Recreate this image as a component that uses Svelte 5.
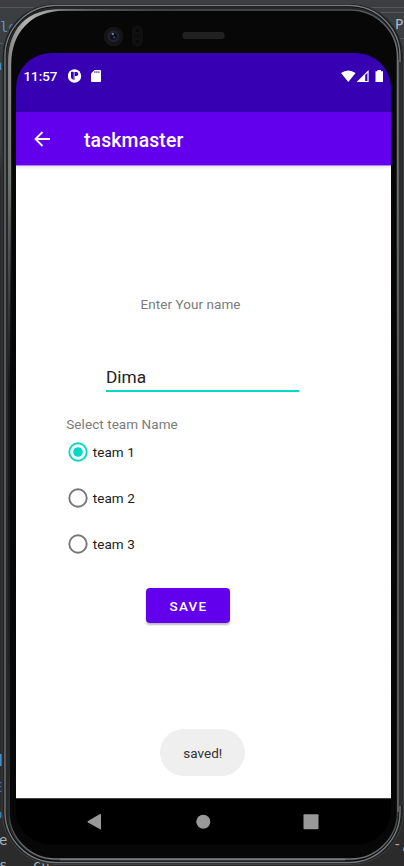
<script>
  const teams = ['team 1', 'team 2', 'team 3'];
  let selected = $state('team 1');
  let name = $state('Dima');
</script>

<main class="desk">
  <svg class="shell" width="404" height="866" viewBox="0 0 404 866" aria-hidden="true">
    <defs>
      <linearGradient id="desk" x1="0" y1="0" x2="0" y2="1">
        <stop offset="0" stop-color="#3c3f41" />
        <stop offset=".17" stop-color="#3a3c3e" />
        <stop offset=".2" stop-color="#2b2b2b" />
      </linearGradient>
      <linearGradient id="rim" x1="0" y1="0" x2="0" y2="1">
        <stop offset="0" stop-color="#55575a" />
        <stop offset=".1" stop-color="#858787" />
        <stop offset=".3" stop-color="#5b5d5c" />
        <stop offset=".45" stop-color="#1c1c1c" />
        <stop offset=".6" stop-color="#1a1a1a" />
        <stop offset=".95" stop-color="#3a3b3b" />
        <stop offset="1" stop-color="#747675" />
      </linearGradient>
      <linearGradient id="shine" gradientUnits="userSpaceOnUse" x1="10" y1="0" x2="185" y2="0">
        <stop offset="0" stop-color="#8c8c8c" />
        <stop offset=".1" stop-color="#b4b4b4" />
        <stop offset=".3" stop-color="#8a8a8a" />
        <stop offset="1" stop-color="#333" stop-opacity="0" />
      </linearGradient>
      <linearGradient id="side" gradientUnits="userSpaceOnUse" x1="0" y1="60" x2="0" y2="370">
        <stop offset="0" stop-color="#8c8c8c" />
        <stop offset=".4" stop-color="#70726f" />
        <stop offset="1" stop-color="#1a1a1a" stop-opacity="0" />
      </linearGradient>
    </defs>
    <rect width="404" height="866" fill="url(#desk)" />
    <path d="M0 7.5H404M380 12.5H404M0 43.5H10M396 38.5H404" stroke="#57595b" fill="none" />
    <g class="code">
      <text x="0" y="32" fill="#5e94c4">le</text>
      <text x="395" y="29" fill="#a9b7c6">P</text>
      <text x="-6" y="70" fill="#4d94c8">a</text>
      <text x="-6" y="792" fill="#4f6fc0">E</text>
      <text x="-6" y="819" fill="#4388bd">o</text>
      <text x="-1" y="845" fill="#a8b2ba">e</text>
      <text x="-1" y="870" fill="#a8b2ba">s&nbsp;&nbsp; cu</text>
      <text x="393" y="849" fill="#b9aaa0">-</text>
      <text x="400" y="849" fill="#6ba4d0">,</text>
    </g>
    <rect x="0" y="754" width="2" height="12" fill="#478ac0" />
    <rect x="2" y="3.5" width="401.5" height="861" rx="53" fill="#1f2122" stroke="#3d3f40" />
    <rect x="5" y="5.5" width="395" height="857" rx="51" fill="#08080a" stroke="#777a7c" stroke-width="1.4" />
    <rect x="7" y="8" width="391" height="851.5" rx="49" fill="#08080a" stroke="#25282a" stroke-width="2" />
    <rect x="9" y="10" width="388.5" height="849" rx="47" fill="#070708" stroke="url(#rim)" stroke-width="1.5" />
    <path d="M8.2 64Q8.5 9 62 9.2H185V10.5H66Q38 11 25 26Q11.5 40 11.2 64Z" fill="url(#shine)" />
    <path d="M8.2 64H11.2V370H8.2Z" fill="url(#side)" />
    <path d="M398 60V812" stroke="#6e7070" stroke-width="1.4" />
    <path d="M401 62V806" stroke="#2b2e2f" stroke-width="4" />
    <path d="M60 859.5H345" stroke="#7d7f7e" stroke-width="1.6" />
    <circle cx="113.5" cy="36.5" r="9.8" fill="#151516" />
    <circle cx="113.5" cy="36.2" r="6" fill="#20212a" />
    <circle cx="113.5" cy="36.2" r="3.5" fill="#0c0d18" />
    <circle cx="112.8" cy="34" r="1.2" fill="#777994" />
    <circle cx="114.2" cy="37.5" r="1.2" fill="#34348a" />
    <rect x="133" y="26" width="9" height="20" rx="4.5" fill="#0d0d0e" stroke="#161617" />
    <circle cx="137.5" cy="30.5" r="2.8" fill="#09090a" stroke="#161617" />
    <circle cx="137.5" cy="41.5" r="2.8" fill="#09090a" stroke="#161617" />
    <rect x="183" y="32.5" width="41" height="6" rx="2" fill="#202020" stroke="#292929" stroke-width=".7" />
  </svg>

  <section class="screen">
    <header class="status">
      <span class="clock">11:57</span>
      <svg class="notice" width="14" height="14" viewBox="0 0 14 14">
        <circle cx="6.5" cy="7" r="6.7" fill="#fff" />
        <path d="M3 2.8H5.5V10.2H4.2Q3 9.5 3 8ZM6.9 3H8.3Q10.3 3.2 10.3 5T8.3 7H6.9Z" fill="#3700b3" />
        <path d="M6 3V11" stroke="#3700b3" stroke-width=".9" />
      </svg>
      <svg class="card" width="10" height="12" viewBox="0 0 10 12">
        <path d="M3.5 0H9Q10 0 10 1V11Q10 12 9 12H1Q0 12 0 11V3.5Z" fill="#fff" />
        <path d="M3.9 1.2V3M5.9 1.2V3M7.9 1.2V3" stroke="#3700b3" stroke-width=".9" />
      </svg>
      <svg class="signals" width="43" height="13" viewBox="0 0 43 13">
        <path d="M0 3Q7.3-2 14.6 3L7.3 12Z" fill="#fff" />
        <path d="M15.6 12L27.6 0V12Z" fill="#fff" />
        <path d="M24.2 5L26.4 2.8V11H24.2Z" fill="#3700b3" />
        <path d="M34.5 1.2H36.5V0H40V1.2H42V12H34.5Z" fill="#fff" />
      </svg>
    </header>

    <nav class="bar">
      <svg width="16" height="16" viewBox="0 0 16 16">
        <path d="M16 8H1.6M8.5 1L1.5 8L8.5 15" fill="none" stroke="#fff" stroke-width="1.8" />
      </svg>
      <h1>taskmaster</h1>
    </nav>

    <div class="content">
      <label class="prompt" for="person">Enter Your name</label>
      <input id="person" bind:value={name} spellcheck="false" />
      <p class="teamlabel">Select team Name</p>
      <div class="teams">
        {#each teams as team}
          <button class="team" class:on={team === selected} onclick={() => (selected = team)}>
            <svg class="ring" width="20" height="20" viewBox="0 0 20 20">
              <circle class="edge" cx="10" cy="10" r="8.7" />
              {#if team === selected}<circle class="dot" cx="10" cy="10" r="4.8" />{/if}
            </svg>{team}
          </button>
        {/each}
      </div>
      <button class="save">SAVE</button>
      <div class="toast">saved!</div>
    </div>

    <footer class="keys">
      <svg width="375" height="47" viewBox="0 0 375 47">
        <path d="M0 .5H375" stroke="#444" />
        <path d="M72 22.9L84 16.1Q85 15.8 85 16.7V30.7Q85 31.7 84 31.3L72 24.5Q70.8 23.7 72 22.9Z" fill="#999" />
        <circle cx="187.3" cy="23.7" r="7" fill="#999" />
        <rect x="287.5" y="16.2" width="15" height="15" rx="1" fill="#999" />
      </svg>
    </footer>
  </section>
</main>

<style>
  .desk {
    position: relative;
    width: 404px;
    height: 866px;
    overflow: hidden;
    box-sizing: border-box;
    padding: 53px 13px 0 16px;
    font-family: Roboto, sans-serif;
    background: #2b2b2b;
  }
  .shell { position: absolute; inset: 0; }
  .code { font: 14px 'DejaVu Sans Mono', monospace; }
  .screen {
    position: relative;
    display: flex;
    flex-direction: column;
    width: 375px;
    height: 792px;
    overflow: hidden;
    border-radius: 35px;
  }
  .status {
    display: flex;
    align-items: flex-start;
    height: 59px;
    box-sizing: border-box;
    padding: 16px 7px 0 7.5px;
    background: #3700b3;
    color: #fff;
  }
  .clock { width: 44px; font-size: 13.4px; font-weight: 500; line-height: 16px; }
  .card { margin: 1px 0 0 9px; }
  .signals { margin: 1px 0 0 auto; }
  .bar {
    position: relative;
    display: flex;
    align-items: center;
    height: 53px;
    box-sizing: border-box;
    padding: 1px 0 0 18px;
    background: #6200ee;
    box-shadow: 0 1px 0 #b187f0, 0 1px 3px 1px #0002;
  }
  h1 { margin: 3px 0 0 34px; font-size: 19.4px; font-weight: 500; line-height: 24px; letter-spacing: .15px; color: #fff; }
  .content {
    display: flex;
    flex-direction: column;
    align-items: flex-start;
    height: 633px;
    box-sizing: border-box;
    padding-top: 130px;
    background: #fff;
  }
  .prompt, .teamlabel { margin: 0; font-size: 13.5px; line-height: 18px; letter-spacing: .06px; color: #7b7b7b; }
  .prompt { margin-left: 124.5px; }
  input {
    width: 193px;
    height: 31px;
    box-sizing: border-box;
    margin: 48px 0 0 90px;
    padding: 3px 0 0;
    border: 0;
    border-bottom: 2px solid #03dac5;
    border-radius: 0;
    outline: 0;
    background: none;
    font: 17.3px Roboto, sans-serif;
    color: #222;
  }
  .teamlabel { margin: 23px 0 0 50.3px; }
  .teams { margin: -4px 0 0 51.7px; }
  .team {
    display: flex;
    align-items: center;
    height: 46px;
    padding: 0;
    border: 0;
    background: none;
    font: 13.5px Roboto, sans-serif;
    letter-spacing: .08px;
    color: #1b1b1b;
  }
  .ring { margin-right: 5px; }
  .edge { fill: none; stroke: #777; stroke-width: 1.9; }
  .on .edge { stroke: #03dac5; }
  .dot { fill: #03dac5; }
  .save {
    width: 84px;
    height: 34.5px;
    margin: 21.4px 0 0 130px;
    padding: 1px 0 0 1px;
    border: 0;
    border-radius: 4px;
    background: #6200ee;
    box-shadow: 0 1.5px 2px #0004;
    font: 500 13.5px Roboto, sans-serif;
    letter-spacing: 1.25px;
    color: #fff;
  }
  .toast {
    display: flex;
    align-items: center;
    justify-content: center;
    width: 85px;
    height: 47px;
    box-sizing: border-box;
    margin: 106px 0 0 144.3px;
    padding-top: 2px;
    border-radius: 23.5px;
    background: #efefef;
    font-size: 13.5px;
    color: #333;
  }
  .keys { height: 47px; background: #000; }
  .keys svg { display: block; }
</style>
